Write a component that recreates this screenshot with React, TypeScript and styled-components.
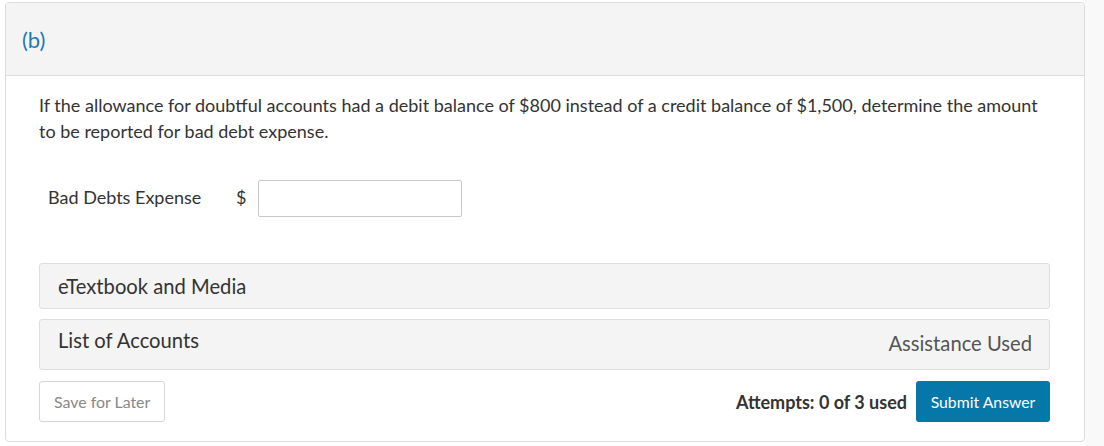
import React from "react";
import styled, { createGlobalStyle } from "styled-components";

const GlobalStyle = createGlobalStyle`
  html, body {
    margin: 0;
    padding: 0;
    background: #ffffff;
    font-family: Lato, "Open Sans", sans-serif;
    color: #333333;
  }
`;

const Page = styled.div`
  display: flex;
  min-height: 446px;
  background: linear-gradient(to right, #ffffff 1085px, #f9f9f9 1085px);
  padding: 2px 0 0 5px;
  box-sizing: border-box;
`;

const Card = styled.section`
  width: 1080px;
  height: 440px;
  box-sizing: border-box;
  border: 1px solid #dcdcdc;
  border-radius: 4px;
  background: #ffffff;
  overflow: hidden;
  display: flex;
  flex-direction: column;
`;

const Header = styled.header`
  height: 73px;
  box-sizing: border-box;
  background: #f4f4f4;
  border-bottom: 1px solid #dcdcdc;
  display: flex;
  align-items: center;
  padding: 0 0 0 16px;
`;

const PartLabel = styled.h2`
  margin: 0;
  font-size: 22px;
  font-weight: 400;
  color: #1d7ab6;
`;

const Body = styled.div`
  padding: 16px 34px 0 33px;
  display: flex;
  flex-direction: column;
`;

const Question = styled.p`
  margin: 0;
  font-size: 18px;
  line-height: 26px;
  color: #333333;
`;

const AnswerRow = styled.div`
  display: flex;
  align-items: center;
  margin-top: 36px;
  padding-left: 9px;
`;

const FieldLabel = styled.label`
  font-size: 18px;
  width: 188px;
  color: #333333;
  margin-top: -4px;
`;

const Currency = styled.span`
  font-size: 18px;
  width: 22px;
  color: #333333;
  margin-top: -4px;
`;

const AmountInput = styled.input`
  width: 204px;
  height: 37px;
  box-sizing: border-box;
  border: 1px solid #c8c8c8;
  border-radius: 2px;
  font: inherit;
  padding: 0 8px;
`;

const Panels = styled.div`
  margin-top: 46px;
  display: flex;
  flex-direction: column;
  gap: 10px;
`;

const Panel = styled.div<{ $tall?: boolean }>`
  height: ${(p) => (p.$tall ? 51 : 46)}px;
  box-sizing: border-box;
  background: #f4f4f4;
  border: 1px solid #dedede;
  border-radius: 3px;
  display: flex;
  align-items: ${(p) => (p.$tall ? "flex-start" : "center")};
  justify-content: space-between;
  padding: ${(p) => (p.$tall ? "8px 17px 0 18px" : "0 17px 0 18px")};
`;

const PanelTitle = styled.span`
  font-size: 20.2px;
  color: #333333;
`;

const Assistance = styled.span`
  font-size: 20.2px;
  color: #555555;
  margin-top: 3px;
`;

const Footer = styled.div`
  margin-top: 11px;
  display: flex;
  align-items: center;
`;

const SaveButton = styled.button`
  height: 41px;
  padding: 0 14px;
  border: 1px solid #d6d6d6;
  border-radius: 3px;
  background: #ffffff;
  color: #888888;
  font-family: Lato, sans-serif;
  font-size: 15.9px;
`;

const Attempts = styled.span`
  margin-left: auto;
  margin-right: 9px;
  font-size: 18px;
  font-weight: 700;
  color: #333333;
`;

const SubmitButton = styled.button`
  height: 41px;
  width: 134px;
  border: none;
  border-radius: 3px;
  background: #0577a8;
  color: #ffffff;
  font-family: Lato, sans-serif;
  font-size: 15.8px;
`;

export default function App() {
  return (
    <>
      <GlobalStyle />
      <Page>
        <Card>
          <Header>
            <PartLabel>(b)</PartLabel>
          </Header>
          <Body>
            <Question>
              If the allowance for doubtful accounts had a debit balance of $800 instead of a credit balance of $1,500,
              determine the amount to be reported for bad debt expense.
            </Question>
            <AnswerRow>
              <FieldLabel>Bad Debts Expense</FieldLabel>
              <Currency>$</Currency>
              <AmountInput type="text" />
            </AnswerRow>
            <Panels>
              <Panel>
                <PanelTitle>eTextbook and Media</PanelTitle>
              </Panel>
              <Panel $tall>
                <PanelTitle>List of Accounts</PanelTitle>
                <Assistance>Assistance Used</Assistance>
              </Panel>
            </Panels>
            <Footer>
              <SaveButton>Save for Later</SaveButton>
              <Attempts>Attempts: 0 of 3 used</Attempts>
              <SubmitButton>Submit Answer</SubmitButton>
            </Footer>
          </Body>
        </Card>
      </Page>
    </>
  );
}
